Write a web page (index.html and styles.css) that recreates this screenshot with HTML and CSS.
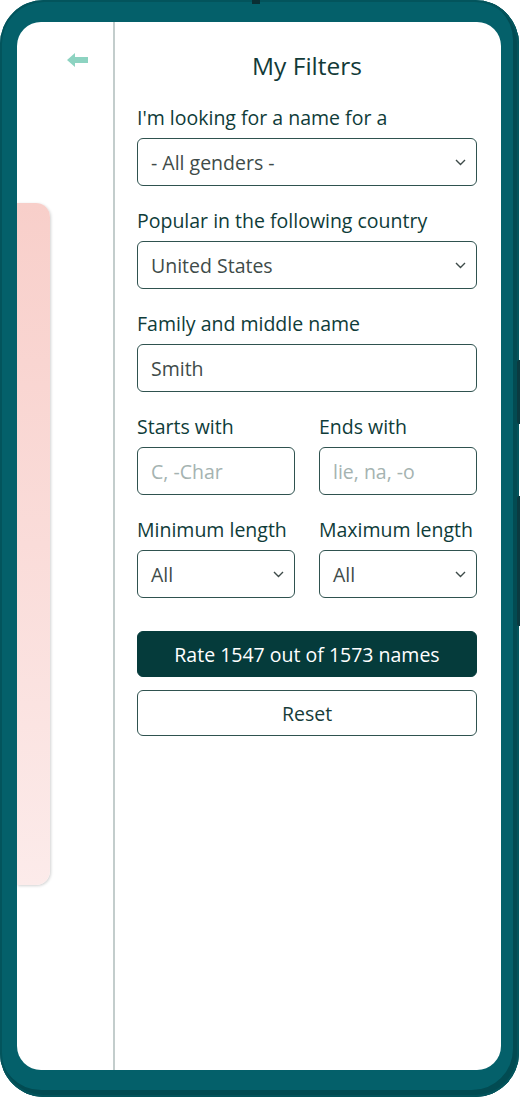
FILE: index.html
```html
<!DOCTYPE html>
<html lang="en">
<head>
<meta charset="utf-8">
<title>My Filters</title>
<link rel="stylesheet" href="styles.css">
</head>
<body>
<div class="phone">
  <div class="notch"></div>
  <div class="side-btn side-btn-a"></div>
  <div class="side-btn side-btn-b"></div>
  <div class="screen">
    <aside class="left">
      <svg class="back" width="21" height="14" viewBox="0 0 21 14"><path d="M0 7 L8 0 L8 4 L21 4 L21 10 L8 10 L8 14 Z" fill="#8dd3c1"/></svg>
      <div class="card"></div>
    </aside>
    <main class="panel">
      <h1 class="title">My Filters</h1>
      <div class="field">
        <div class="label">I'm looking for a name for a</div>
        <div class="box select"><span class="val">- All genders -</span><svg class="chev" width="11" height="7" viewBox="0 0 11 7"><path d="M1 1 L5.5 5.5 L10 1" fill="none" stroke="#3e4b49" stroke-width="1.4"/></svg></div>
      </div>
      <div class="field">
        <div class="label">Popular in the following country</div>
        <div class="box select"><span class="val">United States</span><svg class="chev" width="11" height="7" viewBox="0 0 11 7"><path d="M1 1 L5.5 5.5 L10 1" fill="none" stroke="#3e4b49" stroke-width="1.4"/></svg></div>
      </div>
      <div class="field">
        <div class="label">Family and middle name</div>
        <div class="box"><span class="val">Smith</span></div>
      </div>
      <div class="row">
        <div class="field">
          <div class="label">Starts with</div>
          <div class="box"><span class="ph">C, -Char</span></div>
        </div>
        <div class="field">
          <div class="label">Ends with</div>
          <div class="box"><span class="ph">lie, na, -o</span></div>
        </div>
      </div>
      <div class="row">
        <div class="field">
          <div class="label">Minimum length</div>
          <div class="box select"><span class="val">All</span><svg class="chev" width="11" height="7" viewBox="0 0 11 7"><path d="M1 1 L5.5 5.5 L10 1" fill="none" stroke="#3e4b49" stroke-width="1.4"/></svg></div>
        </div>
        <div class="field">
          <div class="label">Maximum length</div>
          <div class="box select"><span class="val">All</span><svg class="chev" width="11" height="7" viewBox="0 0 11 7"><path d="M1 1 L5.5 5.5 L10 1" fill="none" stroke="#3e4b49" stroke-width="1.4"/></svg></div>
        </div>
      </div>
      <button class="btn btn-primary">Rate 1547 out of 1573 names</button>
      <button class="btn btn-outline">Reset</button>
    </main>
  </div>
</div>
</body>
</html>
```

FILE: styles.css
```css
* { box-sizing: border-box; }
html, body { margin: 0; padding: 0; background: #ffffff; }
body {
  font-family: "Open Sans", "Noto Sans", sans-serif;
  width: 520px;
  height: 1099px;
  overflow: hidden;
}
.phone {
  position: relative;
  width: 519px;
  height: 1097px;
  background: #04606a;
  border-radius: 44px;
  padding: 22px 18px 27px 17px;
  box-shadow: inset 0 0 0 2px #03545c, inset -3px -4px 0 3px #024b52;
}
.notch {
  position: absolute;
  left: 252px;
  top: 0;
  width: 8px;
  height: 4px;
  background: #0a2e33;
}
.side-btn {
  position: absolute;
  right: -2px;
  width: 4px;
  background: #0b3a40;
  border-radius: 2px 0 0 2px;
}
.side-btn-a { top: 360px; height: 64px; }
.side-btn-b { top: 496px; height: 130px; }
.screen {
  display: flex;
  height: 100%;
  background: #ffffff;
  border-radius: 24px;
  overflow: hidden;
}
.left {
  width: 98px;
  flex: none;
  border-right: 2px solid #c3cdcc;
  display: flex;
  flex-direction: column;
  align-items: flex-start;
}
.back {
  margin: 31px 0 0 50px;
}
.card {
  margin-top: 136px;
  width: 33px;
  height: 682px;
  border-radius: 0 14px 14px 0;
  background: linear-gradient(to bottom, #f8cfca 0%, #fadcd9 50%, #fcebea 100%);
  box-shadow: 1px 1px 3px rgba(0,0,0,0.18);
}
.panel {
  flex: 1;
  padding: 29px 24px 0 22px;
  display: flex;
  flex-direction: column;
}
.title {
  margin: 0 0 25px 0;
  text-align: center;
  font-size: 24.5px;
  line-height: 30px;
  font-weight: 400;
  color: #123a38;
}
.field {
  display: flex;
  flex-direction: column;
  gap: 8px;
  margin-bottom: 23px;
}
.row {
  display: grid;
  grid-template-columns: 1fr 1fr;
  column-gap: 24px;
}
.label {
  font-size: 19.5px;
  line-height: 24px;
  color: #0f3c39;
  white-space: nowrap;
}
.box {
  height: 48px;
  border: 1.5px solid #2f524f;
  border-radius: 6px;
  display: flex;
  align-items: center;
  justify-content: space-between;
  padding: 0 10px 0 13px;
  font-size: 19.5px;
}
.val { color: #404b49; }
.ph { color: #a5b3b1; }
.chev { flex: none; margin-top: 1px; }
.btn {
  font-family: inherit;
  font-size: 19.5px;
  height: 46px;
  border-radius: 6px;
  width: 100%;
  cursor: pointer;
}
.btn-primary {
  margin-top: 10px;
  background: #053b3b;
  color: #ffffff;
  border: 1px solid #053b3b;
}
.btn-outline {
  margin-top: 13px;
  background: #ffffff;
  color: #173c3a;
  border: 1.5px solid #2f524f;
}
```
